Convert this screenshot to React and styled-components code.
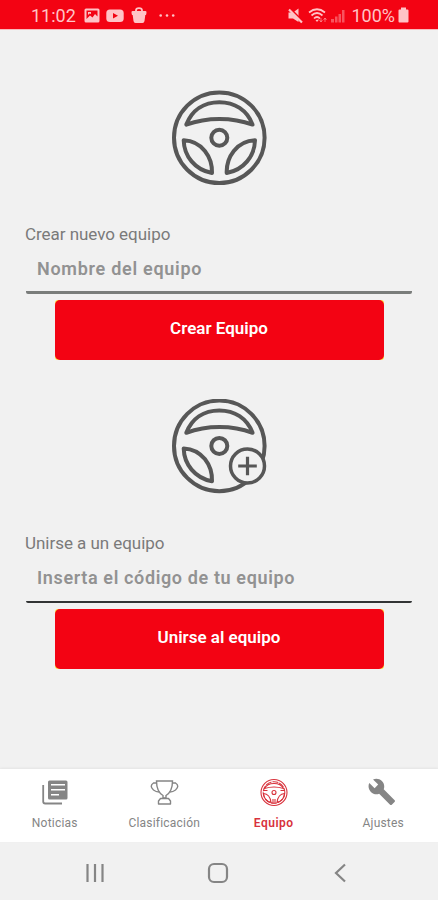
import React from "react";
import styled, { createGlobalStyle } from "styled-components";

const GlobalStyle = createGlobalStyle`
  * {
    box-sizing: border-box;
  }

  body {
    margin: 0;
    background-color: #f1f1f1;
    font-family: Roboto, "Liberation Sans", sans-serif;
  }
`;

const Pantalla = styled.div`
  height: 900px;
  width: 438px;
  display: flex;
  flex-direction: column;
  overflow: hidden;
  background-color: #f1f1f1;
`;

const BarraEstado = styled.header`
  height: 29px;
  flex-shrink: 0;
  display: flex;
  align-items: center;
  justify-content: space-between;
  padding: 3px 29px 0 31px;
  background-color: #f30313;
  box-shadow: 0 1px 0 #f9b9bc;
  color: #ffc3c6;
`;

const GrupoEstado = styled.div`
  display: flex;
  align-items: center;
`;

const TextoEstado = styled.span`
  margin-left: ${({ $margen }) => $margen || 0}px;
  font-size: 18px;
  line-height: 22px;
`;

const IconoEstado = styled.svg`
  height: 18px;
  width: ${({ $ancho }) => $ancho}px;
  margin-left: ${({ $margen }) => $margen || 0}px;
  display: block;
  fill: currentColor;
`;

const Contenido = styled.main`
  height: 740px;
  flex-shrink: 0;
  display: flex;
  flex-direction: column;
  padding-top: 61px;
`;

const Bloque = styled.section`
  height: 309px;
  display: flex;
  flex-direction: column;
  align-items: center;
`;

const Volante = styled.svg`
  height: 96px;
  width: 96px;
  display: block;
  fill: none;
  stroke: #575757;
  stroke-width: 4;
  stroke-linejoin: round;
`;

const Campo = styled.div`
  width: 386px;
  height: 71px;
  margin-top: 37px;
  display: flex;
  flex-direction: column;
  border-bottom: ${({ $linea }) => $linea};
  border-radius: 2px;
`;

const Etiqueta = styled.label`
  height: 22px;
  margin-left: -1px;
  font-size: 17px;
  line-height: 22px;
  letter-spacing: -0.04px;
  color: #7a7a7a;
`;

const Entrada = styled.input`
  height: 30px;
  width: 100%;
  margin-top: 8px;
  padding: 0 11px;
  border: none;
  outline: none;
  background: transparent;
  font-family: Roboto, sans-serif;
  font-size: 18px;
  font-weight: 600;
  letter-spacing: ${({ $espacio }) => $espacio};
  color: #555;

  &::placeholder {
    color: #929292;
    opacity: 1;
  }
`;

// El fondo amarillo solo asoma en las esquinas
const Boton = styled.button`
  height: 60px;
  width: 329px;
  margin-top: 6px;
  padding: 0;
  display: flex;
  border: none;
  border-radius: 3px;
  background-color: #ffdf3a;
`;

const TextoBoton = styled.span`
  height: 100%;
  width: 100%;
  display: flex;
  align-items: center;
  justify-content: center;
  padding-bottom: 5px;
  border-radius: 5px;
  background-color: #f30313;
  font-family: Roboto, sans-serif;
  font-size: 17px;
  font-weight: 600;
  color: #fff;
`;

const Navegacion = styled.nav`
  height: 73px;
  flex-shrink: 0;
  display: grid;
  grid-template-columns: repeat(4, 1fr);
  background-color: #fff;
  box-shadow: 0 -1px 2px #e4e4e4;
`;

const Pestana = styled.div`
  display: flex;
  flex-direction: column;
  align-items: center;
  padding-top: 9px;
  color: ${({ $activa }) => ($activa ? "#d8323c" : "#858585")};
`;

const IconoPestana = styled.svg`
  height: 30px;
  width: 30px;
  display: block;
  fill: none;
  stroke: currentColor;
`;

const TextoPestana = styled.span`
  height: 18px;
  margin-top: 6px;
  font-size: 12px;
  font-weight: ${({ $activa }) => ($activa ? 600 : 400)};
  line-height: 18px;
  letter-spacing: ${({ $activa }) => ($activa ? "0.5px" : "0.2px")};
  white-space: nowrap;
`;

const BarraSistema = styled.footer`
  height: 58px;
  flex-shrink: 0;
  display: flex;
  justify-content: space-between;
  align-items: center;
  padding: 3px 86px 0 83px;
`;

const IconoSistema = styled.svg`
  height: 24px;
  width: 24px;
  display: block;
  fill: none;
  stroke: #858585;
  stroke-width: 2.2;
`;

// Volante de los formularios, con el símbolo "+" opcional
const IconoVolante = ({ agregar }) => (
  <Volante viewBox={agregar ? "0 0.8 96 96" : "0 0 96 96"}>
    <circle cx="48.3" cy="47.7" r="45.3" />
    <path d="M15.3 34.6C21 20 33 12.2 48.3 12.2S76 20 81.6 34.6C61 27 36 27 15.3 34.6Z" />
    <circle cx="48.3" cy="47.7" r="8" />
    <path d="M12.7 50.2C13 66 24 80 41 83C41.5 67 31 51 12.7 50.2Z" />
    {agregar ? (
      <>
        <circle cx="76.5" cy="67.8" r="17" fill="#f1f1f1" strokeWidth="3.5" />
        <path d="M67.2 67.8H85.8M76.5 58.5V77.1" strokeWidth="3.2" />
      </>
    ) : (
      <path d="M84 50.2C83.7 66 72.7 80 55.7 83C55.2 67 65.7 51 84 50.2Z" />
    )}
  </Volante>
);

const Formulario = ({ agregar, etiqueta, ayuda, boton, linea, espacio }) => (
  <Bloque>
    <IconoVolante agregar={agregar} />
    <Campo $linea={linea}>
      <Etiqueta>{etiqueta}</Etiqueta>
      <Entrada placeholder={ayuda} $espacio={espacio} />
    </Campo>
    <Boton>
      <TextoBoton>{boton}</TextoBoton>
    </Boton>
  </Bloque>
);

const App = () => {
  return (
    <Pantalla>
      <GlobalStyle />
      <BarraEstado>
        <GrupoEstado>
          <TextoEstado>11:02</TextoEstado>
          <IconoEstado $ancho={16} $margen={8} viewBox="0 0 16 18">
            <path
              fillRule="evenodd"
              d="M2 1.5H14Q15.5 1.5 15.5 3V14Q15.5 15.5 14 15.5H2Q.5 15.5.5 14V3Q.5 1.5 2 1.5ZM2.5 3.5V12L6 8.5L8.5 10.5L11 7L13.500 9.5V3.5ZM4 5H7V7L5.5 6.5L4 8Z"
            />
          </IconoEstado>
          <IconoEstado $ancho={18} $margen={6} viewBox="0 0 18 18">
            <path
              fillRule="evenodd"
              d="M4 2.5H14Q17.7 2.5 17.7 6V11.5Q17.7 15 14 15H4Q.3 15 .3 11.5V6Q.3 2.5 4 2.5ZM7 6V11.5L12 8.7Z"
            />
          </IconoEstado>
          <IconoEstado $ancho={16} $margen={7} viewBox="0 0 16 18">
            <path d="M1.500 4H14.500Q15.800 4 15.500 6L15 8H14.300L13.500 14Q13.200 16 11.500 16H4.500Q2.800 16 2.500 14L1.700 8H1L.5 6Q.2 4 1.500 4Z" />
            <path d="M5 5V3.500Q5 1.200 8 1.200T11 3.500V5" fill="none" stroke="currentColor" strokeWidth="1.8" />
          </IconoEstado>
          <IconoEstado $ancho={16} $margen={12} viewBox="0 0 16 18">
            <circle cx="1.7" cy="8.5" r="1.3" />
            <circle cx="8" cy="8.5" r="1.3" />
            <circle cx="14.2" cy="8.5" r="1.3" />
          </IconoEstado>
        </GrupoEstado>
        <GrupoEstado>
          <IconoEstado $ancho={15} viewBox="0 0 15 18">
            <path d="M.5 5.5H5L10.5 1.5V15L5 11.5H.5Z" />
            <path d="M1 .5L15 14.500" stroke="#f30313" strokeWidth="2" />
            <path d="M1 2.500L14 15.5" stroke="currentColor" strokeWidth="2.2" />
          </IconoEstado>
          <IconoEstado $ancho={20} $margen={5} viewBox="0 0 20 18">
            <path
              d="M1 5.5Q9 -1 17 5.5M3.5 8.5Q9 3.5 14.5 8.5M6 11.5Q9 8.5 12 11.5"
              fill="none"
              stroke="currentColor"
              strokeWidth="1.7"
            />
            <path d="M7.5 13L9 15L11 12.5Z" />
            <path d="M13 11V15M11.5 13L13 15L14.5 13M17 15V11M15.5 13L17 11L18.5 13" fill="none" stroke="currentColor" opacity=".5" />
          </IconoEstado>
          <IconoEstado $ancho={15} $margen={3} viewBox="0 0 15 18">
            <path d="M0 12H3V15.5H0ZM4 9.5H6.5V15.5H4ZM7.5 7H10V15.5H7.5ZM11 3H13.5V15.5H11Z" opacity=".42" />
          </IconoEstado>
          <TextoEstado $margen={5}>100%</TextoEstado>
          <IconoEstado $ancho={11} $margen={3} viewBox="0 0 11 18">
            <path d="M3 .5H8V2.5H9.5Q10.5 2.5 10.5 3.5V14.5Q10.5 15.5 9.5 15.5H1.5Q.5 15.5.5 14.5V3.5Q.5 2.5 1.5 2.5H3Z" />
          </IconoEstado>
        </GrupoEstado>
      </BarraEstado>

      <Contenido>
        <Formulario
          etiqueta="Crear nuevo equipo"
          ayuda="Nombre del equipo"
          boton="Crear Equipo"
          linea="3px solid #7a7d7b"
          espacio="0.72px"
        />
        <Formulario
          agregar
          etiqueta="Unirse a un equipo"
          ayuda="Inserta el código de tu equipo"
          boton="Unirse al equipo"
          linea="2px solid #323435"
          espacio="0.63px"
        />
      </Contenido>

      <Navegacion>
        <Pestana>
          <IconoPestana viewBox="0 0 30 30">
            <path d="M3.2 7V23.500Q3.2 25.500 5.2 25.5H22" strokeWidth="1.8" />
            <path
              fill="currentColor"
              stroke="none"
              fillRule="evenodd"
              d="M9.500 2.5H26Q27.5 2.500 27.5 4V20Q27.5 21.500 26 21.5H9.5Q8 21.500 8 20V4Q8 2.500 9.5 2.5ZM11 6V7.500H25V6ZM11 11V12.500H25V11ZM11 16V17.500H19V16Z"
            />
          </IconoPestana>
          <TextoPestana>Noticias</TextoPestana>
        </Pestana>
        <Pestana>
          <IconoPestana viewBox="0 0 30 30" strokeWidth="1.4">
            <path d="M7.500 3H23.500Q23.500 13.500 17 17.500V20H14V17.500Q7.500 13.500 7.500 3Z" />
            <path d="M7.500 5H4.500Q0 8 4.500 12Q7 14 10 14M23.500 5H26.500Q31 8 26.500 12Q24 14 21 14" />
            <path d="M11.500 20.500H19.500L21.500 23V26H9.500V23Z" strokeLinejoin="round" />
          </IconoPestana>
          <TextoPestana>Clasificación</TextoPestana>
        </Pestana>
        <Pestana $activa>
          <IconoPestana viewBox="0 0 30 30" strokeWidth="1.1">
            <circle cx="15" cy="14.5" r="13" />
            <circle cx="15" cy="14.5" r="10.8" strokeDasharray="6 1" />
            <path d="M5.500 10.500Q8 5.500 15 5.500T24.500 10.500Q15 7.500 5.500 10.500Z" />
            <circle cx="15" cy="14.5" r="2" />
            <path d="M4.500 15.500Q11 16 12 24.500Q5 22.500 4.500 15.500ZM25.500 15.500Q19 16 18 24.500Q25 22.500 25.500 15.500Z" />
            <path d="M4 12.500H8.500M26 12.500H21.500M14 21V25.500M16 21V25.500" />
          </IconoPestana>
          <TextoPestana $activa>Equipo</TextoPestana>
        </Pestana>
        <Pestana>
          <IconoPestana viewBox="0.5 0.5 25 25">
            <path
              fill="currentColor"
              stroke="none"
              d="M22.7 19l-9.1-9.1c.9-2.3.4-5-1.5-6.9-2-2-5-2.4-7.4-1.3L9 6 6 9 1.6 4.7C.4 7.1.9 10.1 2.9 12.1c1.9 1.9 4.6 2.4 6.9 1.5l9.1 9.1c.4.4 1 .4 1.4 0l2.3-2.3c.5-.4.5-1.1.1-1.4z"
            />
          </IconoPestana>
          <TextoPestana>Ajustes</TextoPestana>
        </Pestana>
      </Navegacion>

      <BarraSistema>
        <IconoSistema viewBox="0 0 24 24">
          <path d="M4.5 3V21M12 3V21M19.5 3V21" />
        </IconoSistema>
        <IconoSistema viewBox="0 0 24 24">
          <rect x="3" y="3" width="18" height="18" rx="5" />
        </IconoSistema>
        <IconoSistema viewBox="0 0 24 24">
          <path d="M17 3.5L8 12L17 20.5" />
        </IconoSistema>
      </BarraSistema>
    </Pantalla>
  );
};

export default App;
